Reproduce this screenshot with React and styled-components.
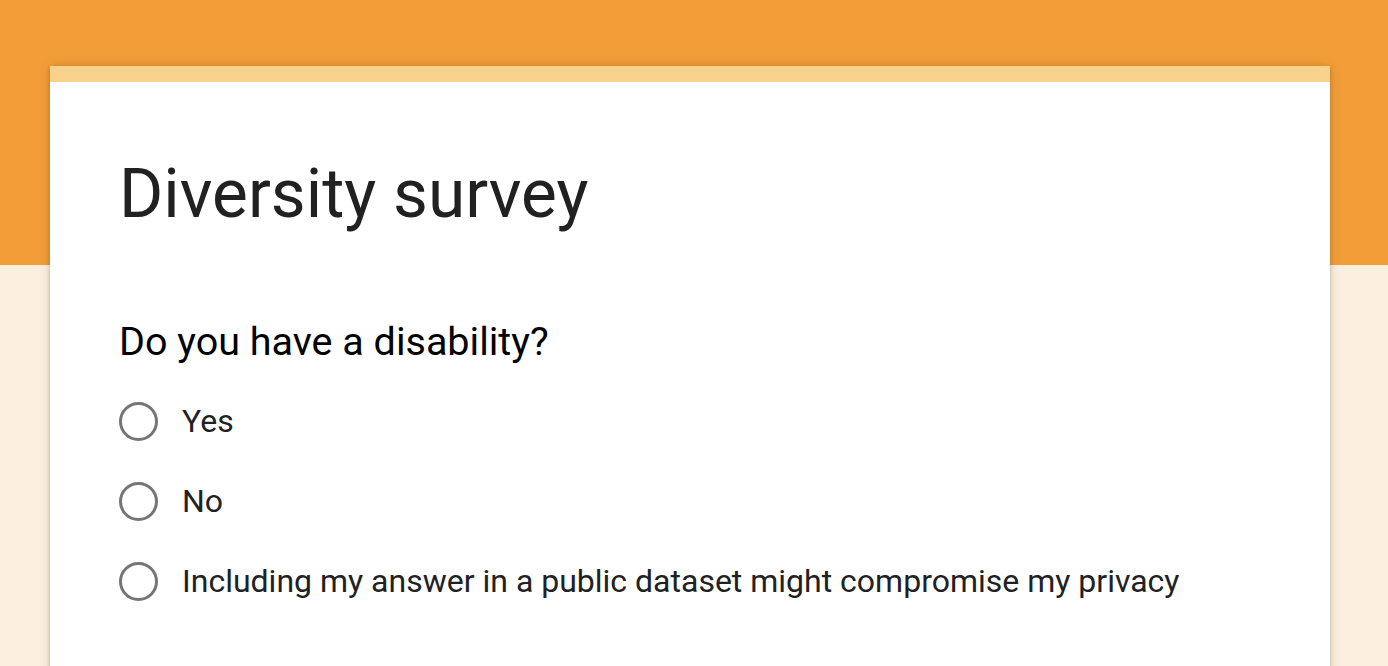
import React from "react";
import styled, { createGlobalStyle } from "styled-components";

const GlobalStyle = createGlobalStyle`
  html, body {
    margin: 0;
    padding: 0;
    height: 100%;
    overflow: hidden;
  }
  body {
    font-family: Roboto, "Liberation Sans", Arial, sans-serif;
    background: #fbf0df;
  }
`;

const Page = styled.div`
  position: relative;
  min-height: 666px;
  background: linear-gradient(to bottom, #f29d38 0, #f29d38 265px, #fbf0df 265px);
  padding-top: 66px;
  box-sizing: border-box;
`;

const Card = styled.div`
  width: 1280px;
  margin: 0 0 0 50px;
  min-height: 700px;
  background: #fff;
  border-top: 16px solid #f8d28c;
  box-shadow: 0 2px 4px rgba(0, 0, 0, 0.2), 0 0 12px rgba(0, 0, 0, 0.12);
  padding: 74px 69px 0;
  box-sizing: border-box;
`;

const Title = styled.h1`
  margin: 0;
  font-weight: 400;
  font-size: 67.6px;
  line-height: 76px;
  color: #212121;
`;

const Question = styled.h2`
  margin: 86px 0 0;
  font-weight: 400;
  font-size: 39.5px;
  line-height: 48px;
  color: #000;
`;

const Options = styled.div`
  display: flex;
  flex-direction: column;
  gap: 38px;
  margin-top: 34px;
`;

const Option = styled.label`
  display: flex;
  align-items: center;
  gap: 24px;
  height: 42px;
  cursor: pointer;
`;

const Radio = styled.span`
  width: 39px;
  height: 39px;
  box-sizing: border-box;
  border: 3px solid #757575;
  border-radius: 50%;
  flex: none;
`;

const OptionText = styled.span`
  font-size: 32px;
  color: #202124;
`;

const options = [
  "Yes",
  "No",
  "Including my answer in a public dataset might compromise my privacy",
];

export default function App() {
  return (
    <>
      <GlobalStyle />
      <Page>
        <Card>
          <Title>Diversity survey</Title>
          <Question>Do you have a disability?</Question>
          <Options>
            {options.map((o) => (
              <Option key={o}>
                <Radio />
                <OptionText>{o}</OptionText>
              </Option>
            ))}
          </Options>
        </Card>
      </Page>
    </>
  );
}
